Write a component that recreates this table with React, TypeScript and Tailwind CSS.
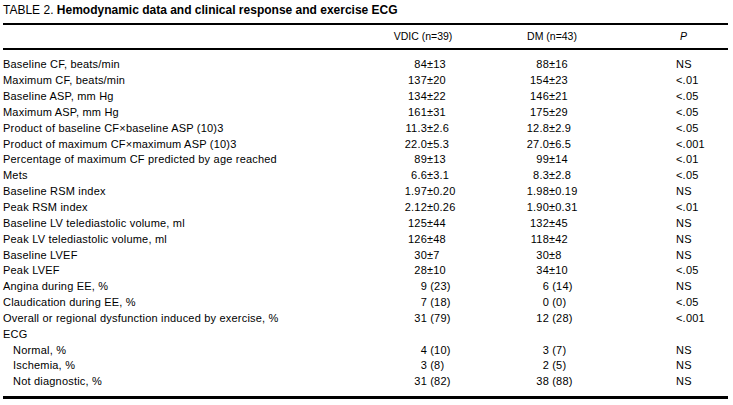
const rows: { label: string; a: string; b: string; p: string; indent?: boolean }[] = [
  { label: "Baseline CF, beats/min", a: "84±13", b: "88±16", p: "NS" },
  { label: "Maximum CF, beats/min", a: "137±20", b: "154±23", p: "<.01" },
  { label: "Baseline ASP, mm Hg", a: "134±22", b: "146±21", p: "<.05" },
  { label: "Maximum ASP, mm Hg", a: "161±31", b: "175±29", p: "<.05" },
  { label: "Product of baseline CF×baseline ASP (10)3", a: "11.3±2.6", b: "12.8±2.9", p: "<.05" },
  { label: "Product of maximum CF×maximum ASP (10)3", a: "22.0±5.3", b: "27.0±6.5", p: "<.001" },
  { label: "Percentage of maximum CF predicted by age reached", a: "89±13", b: "99±14", p: "<.01" },
  { label: "Mets", a: "6.6±3.1", b: "8.3±2.8", p: "<.05" },
  { label: "Baseline RSM index", a: "1.97±0.20", b: "1.98±0.19", p: "NS" },
  { label: "Peak RSM index", a: "2.12±0.26", b: "1.90±0.31", p: "<.01" },
  { label: "Baseline LV telediastolic volume, ml", a: "125±44", b: "132±45", p: "NS" },
  { label: "Peak LV telediastolic volume, ml", a: "126±48", b: "118±42", p: "NS" },
  { label: "Baseline LVEF", a: "30±7", b: "30±8", p: "NS" },
  { label: "Peak LVEF", a: "28±10", b: "34±10", p: "<.05" },
  { label: "Angina during EE, %", a: "9 (23)", b: "6 (14)", p: "NS" },
  { label: "Claudication during EE, %", a: "7 (18)", b: "0 (0)", p: "<.05" },
  { label: "Overall or regional dysfunction induced by exercise, %", a: "31 (79)", b: "12 (28)", p: "<.001" },
  { label: "ECG", a: "", b: "", p: "" },
  { label: "Normal, %", a: "4 (10)", b: "3 (7)", p: "NS", indent: true },
  { label: "Ischemia, %", a: "3 (8)", b: "2 (5)", p: "NS", indent: true },
  { label: "Not diagnostic, %", a: "31 (82)", b: "38 (88)", p: "NS", indent: true },
];

// values line up on the ± sign (or on the space before the parenthesis)
const Aligned = ({ value, box }: { value: string; box: string }) => {
  if (!value) return null;
  const i = value.search(/[± ]/);
  const left = i < 0 ? value : value.slice(0, i);
  const right = i < 0 ? "" : value.slice(i);
  return (
    <>
      <span className={`inline-block text-right ${box}`}>{left}</span>
      <span className="whitespace-pre">{right}</span>
    </>
  );
};

export default function App() {
  return (
    <div className="w-[733px] h-[405px] bg-white text-black font-['Liberation_Sans',Arial,sans-serif] overflow-hidden">
      {/* Title */}
      <div className="px-[3px] pt-[2px] h-[23px] text-[12px] leading-[16px]">
        TABLE 2. <span className="font-bold">Hemodynamic data and clinical response and exercise ECG</span>
      </div>

      <div className="mx-[3px] w-[725px]">
        <div className="h-[2px] bg-black" />

        {/* Header */}
        <div className="flex h-[23px] items-center text-[10.5px]">
          <div className="w-[367px]" />
          <div className="w-[120px] pr-[14px] text-center">VDIC (n=39)</div>
          <div className="w-[124px] text-center">DM (n=43)</div>
          <div className="pl-[66px] italic">P</div>
        </div>

        <div className="h-[2px] bg-black" />

        {/* Body */}
        <div className="pt-[7px] pb-[6px] text-[11px] tracking-[0.2px]">
          {rows.map((r) => (
            <div key={r.label} className="flex h-[15.85px] items-center leading-none">
              <div className={r.indent ? "w-[367px] pl-[10px]" : "w-[367px]"}>{r.label}</div>
              <div className="w-[120px]">
                <Aligned value={r.a} box="w-[57px]" />
              </div>
              <div className="w-[124px]">
                <Aligned value={r.b} box="w-[59px]" />
              </div>
              <div className="pl-[62px]">{r.p}</div>
            </div>
          ))}
        </div>

        <div className="h-[3px] bg-black" />
      </div>
    </div>
  );
}
